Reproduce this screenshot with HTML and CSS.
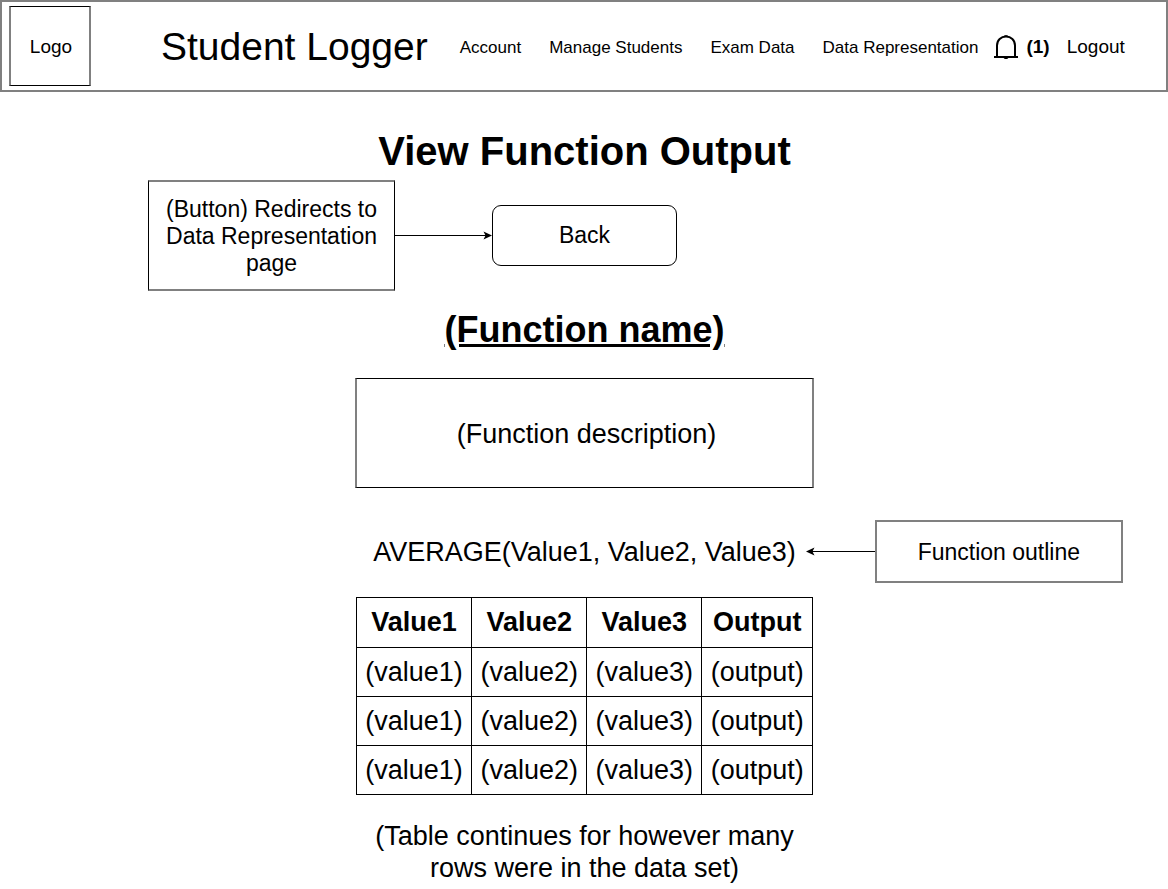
FILE: index.html
```html
<!DOCTYPE html>
<html lang="en">
<head>
<meta charset="utf-8">
<title>Student Logger - View Function Output</title>
<link rel="stylesheet" href="styles.css">
</head>
<body>
<header class="site-header">
  <a class="logo" href="#">Logo</a>
  <span class="brand">Student Logger</span>
  <nav class="nav">
    <a href="#">Account</a>
    <a href="#">Manage Students</a>
    <a href="#">Exam Data</a>
    <a href="#">Data Representation</a>
  </nav>
  <button class="alerts" type="button" aria-label="Notifications (1)">
    <svg width="24" height="26" viewBox="0 0 24 26" fill="none" stroke="#000" stroke-width="2" aria-hidden="true">
      <path d="M3 23V11.500C3 6 7 2.500 12 2.500S21 6 21 11.500V23"/>
      <path d="M0 23H24"/>
      <path d="M9.500 2.500C10 .7 14 .7 14.500 2.500ZM9.500 23.500C10 25.500 14 25.500 14.500 23.500Z" fill="#000" stroke="none"/>
    </svg>
    <span>(1)</span>
  </button>
  <a class="logout" href="#">Logout</a>
</header>

<main class="page">
  <h1 class="title">View Function Output</h1>

  <div class="annotated back-row">
    <div class="side side-left">
      <p class="note note-button">(Button) Redirects to Data Representation page</p>
      <svg class="arrow" width="97" height="9" viewBox="0 0 97 9" aria-hidden="true">
        <path d="M0 4.500H91" stroke="#000"/>
        <path d="M97 4.500L88.500 8.500L90.500 4.500L88.500 .5Z"/>
      </svg>
    </div>
    <button class="back" type="button">Back</button>
  </div>

  <h2 class="function-name">(Function name)</h2>
  <p class="description">(Function description)</p>

  <div class="annotated outline-row">
    <p class="outline">AVERAGE(Value1, Value2, Value3)</p>
    <div class="side side-right">
      <svg class="arrow" width="69" height="9" viewBox="0 0 69 9" aria-hidden="true">
        <path d="M6 4.500H69" stroke="#000"/>
        <path d="M0 4.500L8.500 .5L6.500 4.500L8.500 8.500Z"/>
      </svg>
      <p class="note note-outline">Function outline</p>
    </div>
  </div>

  <table class="output">
    <thead>
      <tr><th scope="col">Value1</th><th scope="col">Value2</th><th scope="col">Value3</th><th scope="col">Output</th></tr>
    </thead>
    <tbody>
      <tr><td>(value1)</td><td>(value2)</td><td>(value3)</td><td>(output)</td></tr>
      <tr><td>(value1)</td><td>(value2)</td><td>(value3)</td><td>(output)</td></tr>
      <tr><td>(value1)</td><td>(value2)</td><td>(value3)</td><td>(output)</td></tr>
    </tbody>
  </table>
  <p class="footnote">(Table continues for however many rows were in the data set)</p>
</main>
</body>
</html>
```
FILE: styles.css
```css
* {
  box-sizing: border-box;
}

body {
  margin: 0;
  background: #fff;
  color: #000;
  font-family: "Liberation Sans", Arial, sans-serif;
}

h1, h2, p {
  margin: 0;
}

a {
  color: inherit;
  text-decoration: none;
}

button {
  background: none;
  border: 0;
  padding: 0;
  color: inherit;
  font-family: inherit;
  cursor: pointer;
}

.site-header {
  display: flex;
  align-items: center;
  padding: 4px 7px;
  border: 2px solid #808080;
  white-space: nowrap;
}

.logo {
  display: flex;
  align-items: center;
  justify-content: center;
  width: 82px;
  height: 80px;
  padding: 2px 0 0 2px;
  border: 1px solid #000;
  border-width: 1px 2px;
  border-color: #000 #808080;
  font-size: 19px;
}

.brand {
  margin-left: 70px;
  padding-top: 2px;
  font-size: 39px;
}

.nav {
  display: flex;
  gap: 28px;
  margin-left: 32px;
  padding-top: 3px;
  font-size: 17px;
  line-height: 22px;
}

.alerts {
  display: flex;
  align-items: center;
  gap: 8px;
  margin-left: 16px;
  padding-top: 2px;
  font-size: 19px;
  font-weight: bold;
}

.logout {
  margin-left: 17px;
  padding-top: 2px;
  font-size: 19px;
}

.page {
  display: flex;
  flex-direction: column;
  align-items: center;
  padding: 36px 0 5px 1px;
}

.title {
  font-size: 40px;
  line-height: 46px;
}

.annotated {
  display: grid;
  grid-template-columns: minmax(0, 1fr) auto minmax(0, 1fr);
  align-items: center;
  align-self: stretch;
}

.side {
  display: flex;
  align-items: center;
}

.side-left {
  justify-content: flex-end;
}

.side-right {
  grid-column: 3;
  padding-left: 10px;
}

.arrow {
  flex: none;
}

.note {
  flex: none;
  display: flex;
  align-items: center;
  justify-content: center;
  font-size: 23px;
  line-height: 27px;
  text-align: center;
}

.note-button {
  width: 247px;
  padding: 14px 14px 12px;
  border: 1px solid #000;
  border-width: 2px 1px;
  border-color: #808080 #000;
}

.note-outline {
  width: 248px;
  height: 63px;
  padding-top: 2px;
  border: 2px solid #808080;
}

.back-row {
  margin-top: 6px;
}

.back {
  grid-column: 2;
  width: 185px;
  height: 61px;
  border: 1px solid #000;
  border-radius: 9px;
  font-size: 23px;
}

.function-name {
  margin-top: 18px;
  font-size: 36px;
  line-height: 42px;
  text-decoration: underline;
}

.description {
  display: flex;
  align-items: center;
  justify-content: center;
  width: 459px;
  height: 110px;
  margin-top: 27px;
  padding: 2px 0 0 4px;
  border: 1px solid #000;
  border-width: 1px 2px;
  border-color: #000 #808080;
  font-size: 27px;
}

.outline-row {
  margin-top: 32px;
}

.outline {
  grid-column: 2;
  padding-top: 2px;
  font-size: 27px;
}

.output {
  width: 457px;
  margin-top: 14px;
  border-collapse: collapse;
  font-size: 27px;
  line-height: 32px;
  text-align: center;
}

.output th,
.output td {
  padding: 8px;
  border: 1px solid #000;
}

.output th {
  padding-bottom: 9px;
}

.footnote {
  max-width: 460px;
  margin-top: 25px;
  font-size: 27px;
  line-height: 32px;
  text-align: center;
}
```
